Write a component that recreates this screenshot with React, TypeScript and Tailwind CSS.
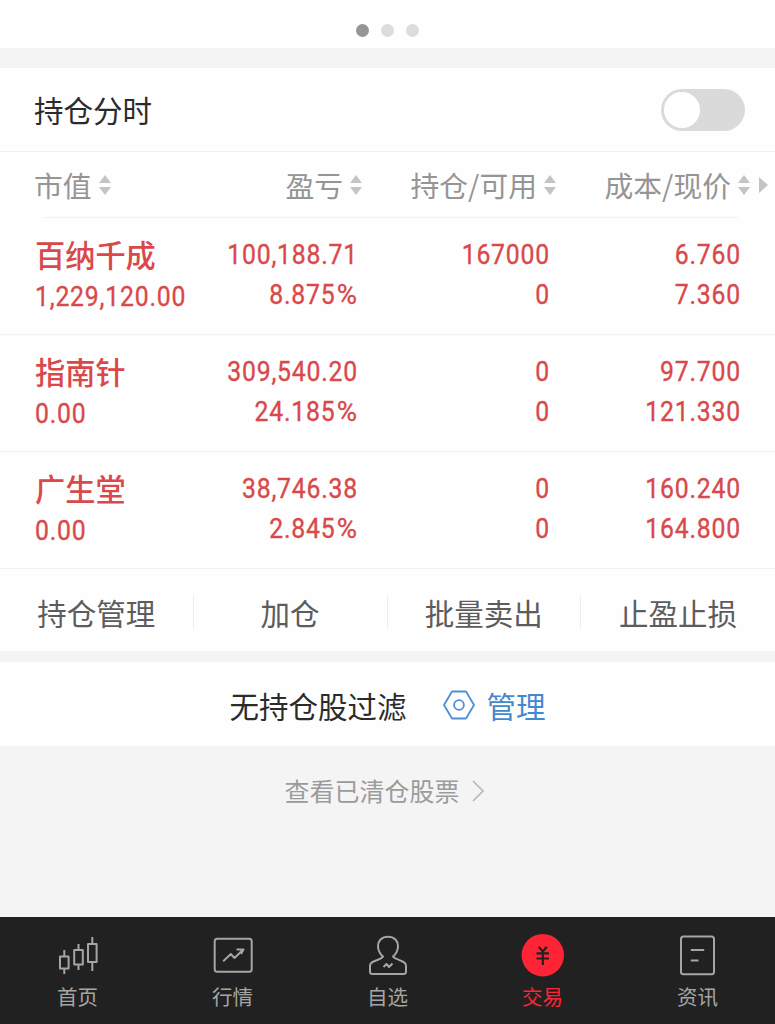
import type { ReactNode } from "react";

const holdings = [
  { name: "百纳千成", value: "1,229,120.00", profit: "100,188.71", rate: "8.875%", held: "167000", usable: "0", cost: "6.760", price: "7.360" },
  { name: "指南针", value: "0.00", profit: "309,540.20", rate: "24.185%", held: "0", usable: "0", cost: "97.700", price: "121.330" },
  { name: "广生堂", value: "0.00", profit: "38,746.38", rate: "2.845%", held: "0", usable: "0", cost: "160.240", price: "164.800" },
];

function SortIcon() {
  return (
    <svg width="14" height="22" viewBox="0 0 14 22" fill="#c4c4c4" className="shrink-0">
      <path d="M7 1 L13 9 H1 Z" />
      <path d="M1 13 H13 L7 21 Z" />
    </svg>
  );
}

function HeadCell({ label, className = "" }: { label: string; className?: string }) {
  return (
    <div className={`flex items-center gap-[6px] ${className}`}>
      <span className="whitespace-nowrap">{label}</span>
      <SortIcon />
    </div>
  );
}

function Num({ children, left = false }: { children: string; left?: boolean }) {
  const percent = children.endsWith("%");
  return (
    <div
      className={`h-10 font-[Roboto,sans-serif] text-[27.5px] leading-10 font-normal tracking-[0.9px] whitespace-nowrap [-webkit-text-stroke:0.35px_#d9484a] ${
        left ? "origin-left scale-x-90 text-left" : "origin-right scale-x-90 text-right"
      }`}
    >
      {percent ? children.slice(0, -1) : children}
      {percent && <span className="ml-[4px] inline-block origin-right scale-x-[1.12]">%</span>}
    </div>
  );
}

function Pair({ a, b }: { a: string; b: string }) {
  return (
    <div className="pt-[17px]">
      <Num>{a}</Num>
      <Num>{b}</Num>
    </div>
  );
}

function Tab({ label, active = false, children }: { label: string; active?: boolean; children: ReactNode }) {
  return (
    <div className={`flex flex-1 flex-col items-center pt-4 ${active ? "text-[#fe2435]" : "text-[#a5a5a5]"}`}>
      <svg width="44" height="44" viewBox="0 0 44 44" fill="none" stroke="currentColor" strokeWidth="2" strokeLinejoin="round">
        {children}
      </svg>
      <span className="mt-1 text-[20.5px] leading-[30px]">{label}</span>
    </div>
  );
}

export default function App() {
  return (
    <div className="flex h-[1024px] w-[775px] flex-col overflow-hidden bg-[#f5f4f5] font-['Noto_Sans_CJK_SC',sans-serif]">
      <div className="flex h-12 shrink-0 items-end justify-center gap-3 bg-[#fefefe] pb-[11px]">
        <i className="size-[13px] rounded-full bg-[#969696]" />
        <i className="size-[13px] rounded-full bg-[#dcdcdc]" />
        <i className="size-[13px] rounded-full bg-[#dcdcdc]" />
      </div>

      <section className="mt-5 shrink-0 bg-[#fefefe]">
        <div className="flex h-[84px] items-center justify-between border-b border-[#f0f0f0] pr-[30px] pl-[34px]">
          <h1 className="text-[29.5px] font-normal text-[#2b2b2b]">持仓分时</h1>
          <div className="flex h-[42px] w-[84px] items-center rounded-full bg-[#dadada] px-[3px]">
            <i className="size-9 rounded-full bg-white" />
          </div>
        </div>

        <div className="flex h-[66px] items-center text-[28.8px] text-[#959595]">
          <HeadCell label="市值" className="w-[112px] pl-[34px]" />
          <HeadCell label="盈亏" className="w-[251px] justify-end" />
          <HeadCell label="持仓/可用" className="w-[194px] justify-end" />
          <HeadCell label="成本/现价" className="w-[194px] justify-end" />
          <svg width="9" height="16" viewBox="0 0 9 16" fill="#c4c4c4" className="ml-2">
            <path d="M0 0 L9 8 L0 16 Z" />
          </svg>
        </div>
        <div className="-mt-px mr-[37px] ml-[43px] h-px bg-[#f2f2f2]" />

        {holdings.map((h) => (
          <div
            key={h.name}
            className="grid h-[117px] grid-cols-[156px_167px_192px_191px] border-b border-[#f2f2f2] pl-[35px] font-medium text-[#d9484a]"
          >
            <div>
              <div className="mt-[15px] h-[44px] text-[30.2px] leading-[42px]">{h.name}</div>
              <Num left>{h.value}</Num>
            </div>
            <Pair a={h.profit} b={h.rate} />
            <Pair a={h.held} b={h.usable} />
            <Pair a={h.cost} b={h.price} />
          </div>
        ))}
      </section>

      <div className="grid h-[82px] shrink-0 grid-cols-4 items-center bg-[#fefefe] pt-1 text-[29.5px] text-[#5c5c5c]">
        {["持仓管理", "加仓", "批量卖出", "止盈止损"].map((t) => (
          <div key={t} className="h-[34px] border-r border-[#eeeeee] text-center leading-[34px] last:border-r-0">
            {t}
          </div>
        ))}
      </div>

      <div className="mt-[11px] flex h-[84px] shrink-0 items-center justify-center bg-[#fefefe] pt-[2px] text-[29.5px]">
        <span className="text-[#2b2b2b]">无持仓股过滤</span>
        <svg width="32" height="30" viewBox="0 0 32 30" fill="none" stroke="#4b8fd6" strokeWidth="1.8" strokeLinejoin="round" className="mr-3 ml-9">
          <path d="M9 1.5 H23 L31 15 L23 28.5 H9 L1 15 Z" />
          <circle cx="16" cy="15" r="4.9" />
        </svg>
        <span className="text-[#4489cf]">管理</span>
      </div>

      <div className="flex h-[90px] shrink-0 items-center justify-center pr-[7px] text-[25px] text-[#9b9b9b]">
        <span>查看已清仓股票</span>
        <svg width="12" height="22" viewBox="0 0 12 22" fill="none" stroke="#b8b8b8" strokeWidth="1.6" className="ml-3">
          <path d="M1 1 L11 11 L1 21" />
        </svg>
      </div>

      <nav className="mt-auto flex h-[107px] shrink-0 bg-[#222122]">
        <Tab label="首页">
          <path d="M4 23.5 h8.6 v12 h-8.6 Z M8.3 17 v6.5 M8.3 35.5 v5.5 M18.2 17 h8.6 v14.5 h-8.6 Z M22.5 11 v6 M22.5 31.5 v5.5 M32 11 h8.6 v18 h-8.6 Z M36.3 4 v7 M36.3 29 v9" />
        </Tab>
        <Tab label="行情">
          <rect x="3.7" y="5.8" width="37" height="33" rx="2.5" />
          <path d="M12.2 28.3 L19.8 21 L23.5 25 L32 16.8 M25.5 16.5 H32.5 L30 21" />
        </Tab>
        <Tab label="自选">
          <path d="M22 3.8 C15.5 3.8 12 8 12 13 C12 17.5 14 21 17 23.5 C15.8 25.5 13 26.3 10 27.5 L6.5 29 Q4 30.3 4 32.5 V38.5 Q4 41 6.5 41 H37.5 Q40 41 40 38.5 V32.5 Q40 30.3 37.5 29 L34 27.3 C31 26 28.2 25.5 27 23.5 C30 21 32 17.5 32 13 C32 8 28.5 3.8 22 3.8 Z" />
          <path d="M17.5 34 L20.5 31 L23 34 L26.5 30.5" />
        </Tab>
        <Tab label="交易" active>
          <circle cx="21.8" cy="22.2" r="21.2" fill="#fe2435" stroke="none" />
          <path d="M17.8 13.8 L21.8 18.6 L25.8 13.8 M15.5 20.3 H28 M15.5 25.5 H28 M21.8 18.6 V32" stroke="#222122" strokeWidth="2.2" />
        </Tab>
        <Tab label="资讯">
          <rect x="5" y="3.6" width="33" height="37.6" rx="2.5" />
          <path d="M14.8 17 H28.2 M14.8 27.6 H22.5" />
        </Tab>
      </nav>
    </div>
  );
}
